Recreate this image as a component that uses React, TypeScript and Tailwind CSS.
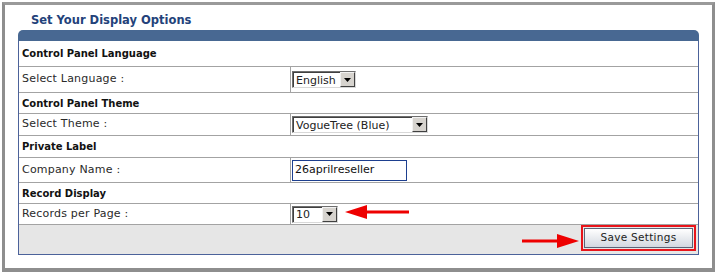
import React from "react";

const font = { fontFamily: '"DejaVu Sans", Verdana, sans-serif' };

function FakeSelect({ value, width }: { value: string; width: number }) {
  return (
    <div
      className="flex items-stretch h-[17px] border border-t-[#6f6f6f] border-l-[#6f6f6f] border-r-[#d8d8d8] border-b-[#d8d8d8] bg-white"
      style={{ width }}
    >
      <div className="flex-1 flex items-center pl-[2px] text-[11px] text-[#222] border-t border-l border-t-[#404040] border-l-[#404040] leading-none">
        {value}
      </div>
      <div className="w-[15px] flex items-center justify-center bg-[#d6d3ce] border border-t-[#f2f2f2] border-l-[#f2f2f2] border-r-[#404040] border-b-[#404040]">
        <svg width="7" height="4" viewBox="0 0 7 4">
          <polygon points="0,0 7,0 3.5,4" fill="#000" />
        </svg>
      </div>
    </div>
  );
}

function Header({ children, h }: { children: React.ReactNode; h: number }) {
  return (
    <div
      className="flex items-center pl-[3px] text-[10px] font-bold text-[#111] border-b border-[#a3a3a3]"
      style={{ height: h }}
    >
      {children}
    </div>
  );
}

function Row({ label, children, h }: { label: string; children: React.ReactNode; h: number }) {
  return (
    <div className="flex border-b border-[#a3a3a3]" style={{ height: h }}>
      <div className="w-[272px] flex items-center pl-[3px] text-[11px] text-[#2a2a2a] tracking-[0.2px] border-r border-[#a3a3a3]">
        {label}
      </div>
      <div className="flex-1 flex items-center pl-[1px]">{children}</div>
    </div>
  );
}

function Arrow({ length }: { length: number }) {
  return (
    <svg width={length} height="14" viewBox={`0 0 ${length} 14`}>
      <rect x="0" y="5.5" width={length - 18} height="3" fill="#e00" />
      <polygon points={`${length - 22},0 ${length},7 ${length - 22},14`} fill="#e00" />
    </svg>
  );
}

export default function App() {
  return (
    <div className="w-[717px] h-[273px] bg-white p-[2px]" style={font}>
      <div className="relative h-[270px] border-t-[3px] border-l-[3px] border-r-[3px] border-b-[4px] border-[#8e8e8e] border-t-[#9a9a9a]">
        <div className="h-[25px] pl-[26px] pt-[10px] text-[11.5px] font-bold text-[#23427a] leading-none">
          Set Your Display Options
        </div>
        <div className="ml-[13px] w-[681px]">
          <div className="h-[11px] bg-[#486892] rounded-t-[5px]" />
          <div className="border-l border-r border-b border-[#4c629a]">
            <Header h={26}>Control Panel Language</Header>
            <Row label="Select Language :" h={26}>
              <FakeSelect value="English" width={64} />
            </Row>
            <Header h={21}>Control Panel Theme</Header>
            <Row label="Select Theme :" h={22}>
              <FakeSelect value="VogueTree (Blue)" width={136} />
            </Row>
            <Header h={22}>Private Label</Header>
            <Row label="Company Name :" h={25}>
              <div className="w-[115px] h-[21px] border border-[#1d3f8f] flex items-center pl-[2px] text-[11px] text-[#111]">
                26aprilreseller
              </div>
            </Row>
            <Header h={21}>Record Display</Header>
            <Row label="Records per Page :" h={21}>
              <FakeSelect value="10" width={46} />
            </Row>
            <div className="h-[29px] bg-[#e6e6e6] flex items-start justify-end pr-[2px]">
              <div className="border-2 border-[#e8141a] p-[1px]">
                <div className="w-[109px] h-[20px] flex items-center justify-center border border-[#5a6478] bg-gradient-to-b from-white to-[#d3d8e0] text-[10.5px] tracking-[0.3px] text-[#222]">
                  Save Settings
                </div>
              </div>
            </div>
          </div>
        </div>
        <div className="absolute left-[340px] top-[200px] rotate-180">
          <Arrow length={64} />
        </div>
        <div className="absolute left-[517px] top-[229px]">
          <Arrow length={57} />
        </div>
      </div>
    </div>
  );
}
